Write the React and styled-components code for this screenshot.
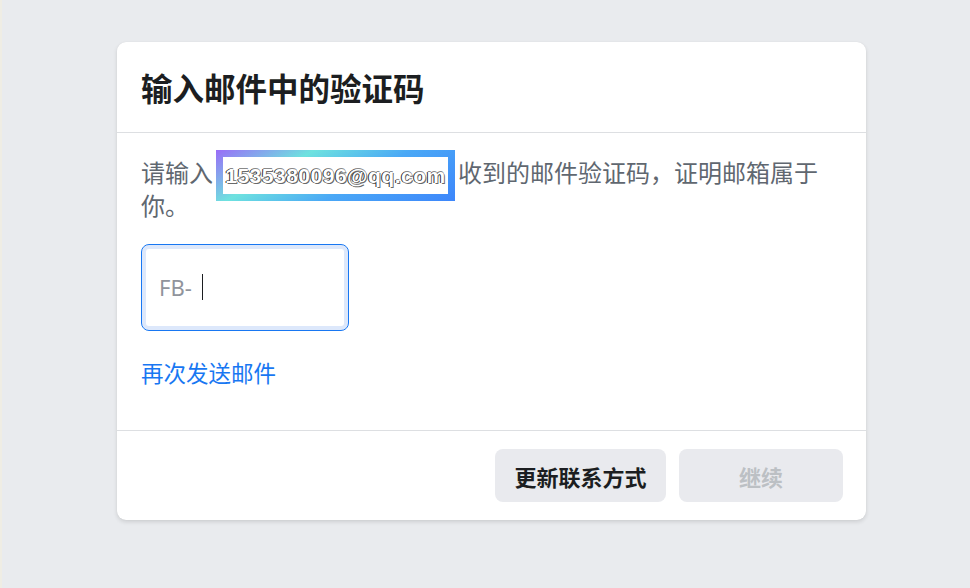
import React from "react";
import styled, { createGlobalStyle } from "styled-components";

const GlobalStyle = createGlobalStyle`
  html, body {
    margin: 0;
    padding: 0;
    background: #e9ebee;
  }
  body {
    font-family: "Noto Sans", "Noto Sans CJK SC", sans-serif;
    border-left: 2px solid #efede4;
    min-height: 588px;
    box-sizing: border-box;
  }
`;

const Page = styled.div`
  padding: 42px 0 0 115px;
`;

const Card = styled.div`
  width: 749px;
  background: #fff;
  border-radius: 9px;
  box-shadow: 0 2px 4px rgba(0, 0, 0, 0.12), 0 0 1px rgba(0, 0, 0, 0.08);
  display: flex;
  flex-direction: column;
`;

const Header = styled.div`
  height: 90px;
  padding: 0 24px;
  display: flex;
  align-items: center;
  border-bottom: 1px solid #dddfe2;
`;

const Title = styled.h2`
  margin: 0;
  font-family: "Noto Sans CJK SC", sans-serif;
  font-size: 31.5px;
  font-weight: 700;
  color: #1c1e21;
`;

const Body = styled.div`
  padding: 24px 24px 40px;
  height: 297px;
  box-sizing: border-box;
`;

const Message = styled.p`
  margin: 0;
  font-family: "Noto Sans CJK SC", sans-serif;
  font-size: 24px;
  line-height: 29px;
  color: #606770;
`;

const EmailBox = styled.span`
  display: inline-block;
  vertical-align: middle;
  margin: -11px 3px -11px 3px;
  padding: 7px;
  background: linear-gradient(150deg, #9a6cf8 0%, #6ee2df 30%, #4aa8f6 60%, #3d86fb 100%);
`;

const EmailText = styled.span`
  display: block;
  width: 225px;
  height: 37px;
  background: #fff;
  font-family: "Liberation Sans", sans-serif;
  font-size: 21px;
  font-weight: 700;
  line-height: 37px;
  letter-spacing: 0.5px;
  text-align: center;
  color: #fff;
  text-shadow: -1px 0 #2b2b2b, 1px 1px #6a6a6a, 0 -1px #8a8a8a;
  overflow: hidden;
  white-space: nowrap;
`;

const CodeInput = styled.div`
  margin-top: 25px;
  width: 208px;
  height: 87px;
  box-sizing: border-box;
  border: 1px solid #1877f2;
  border-radius: 8px;
  box-shadow: inset 0 0 0 4px #dde8fb;
  display: flex;
  align-items: center;
  padding-left: 17px;
  font-size: 22px;
  color: #90949c;
`;

const Caret = styled.span`
  display: inline-block;
  width: 1px;
  height: 26px;
  margin-left: 10px;
  background: #1c1e21;
`;

const Link = styled.a`
  display: inline-block;
  margin-top: 25px;
  font-family: "Noto Sans CJK SC", sans-serif;
  font-size: 22.5px;
  line-height: 32px;
  color: #1877f2;
  text-decoration: none;
`;

const Footer = styled.div`
  border-top: 1px solid #dddfe2;
  padding: 18px 23px 18px;
  display: flex;
  justify-content: flex-end;
  gap: 13px;
`;

const Button = styled.button`
  width: ${(p) => p.$w}px;
  height: 53px;
  border: none;
  border-radius: 8px;
  background: #e9eaee;
  font-family: "Noto Sans CJK SC", sans-serif;
  font-size: 22px;
  font-weight: 700;
  color: ${(p) => (p.disabled ? "#bcc0c4" : "#1c1e21")};
`;

export default function App() {
  return (
    <>
      <GlobalStyle />
      <Page>
        <Card>
          <Header>
            <Title>输入邮件中的验证码</Title>
          </Header>
          <Body>
            <Message>
              请输入
              <EmailBox>
                <EmailText>1535380096@qq.com</EmailText>
              </EmailBox>
              收到的邮件验证码，证明邮箱属于你。
            </Message>
            <CodeInput>
              FB-
              <Caret />
            </CodeInput>
            <Link href="#">再次发送邮件</Link>
          </Body>
          <Footer>
            <Button $w={171}>更新联系方式</Button>
            <Button $w={164} disabled>
              继续
            </Button>
          </Footer>
        </Card>
      </Page>
    </>
  );
}
